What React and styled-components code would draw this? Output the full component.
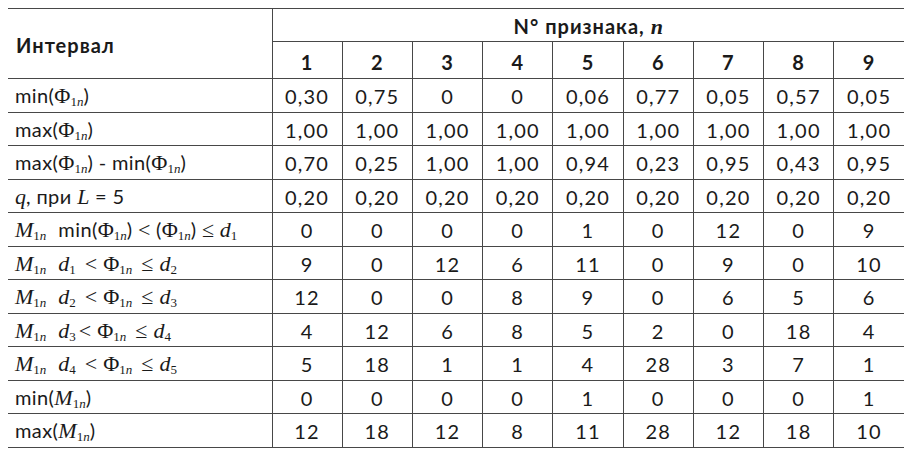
import styled, { createGlobalStyle } from "styled-components";

const line = "#474747";
const ink = "#1a1a1a";

const GlobalStyle = createGlobalStyle`
  body {
    margin: 0;
    background: #ffffff;
  }
`;

const Page = styled.div`
  padding: 8px 8px 0 8px;
`;

const Table = styled.table`
  width: 896px;
  border-collapse: collapse;
  table-layout: fixed;
  font-family: "Lato", "Open Sans", sans-serif;
  font-size: 20px;
  color: ${ink};
`;

const Row = styled.tr`
  height: ${(p) => p.$h || 33.5}px;
  border-top: 1px solid ${line};
  border-bottom: 1px solid ${line};
`;

const HeadCell = styled.th`
  font-weight: 700;
  text-align: ${(p) => (p.$left ? "left" : "center")};
  padding: ${(p) => (p.$left ? "2px 0 0 8px" : "3px 0 0 0")};
  border-left: ${(p) => (p.$left ? "none" : `1px solid ${line}`)};
  border-bottom: 1px solid ${line};
  letter-spacing: 1px;
`;

const LabelCell = styled.td`
  text-align: left;
  padding: 2px 0 0 7px;
  white-space: nowrap;
  letter-spacing: 0.4px;
`;

const Cell = styled.td`
  text-align: center;
  padding: 2px 0 0 0;
  border-left: 1px solid ${line};
  letter-spacing: 1.2px;
`;

const Serif = styled.span`
  font-family: "Liberation Serif", "Times New Roman", serif;
  font-size: 22px;
  font-style: ${(p) => (p.$italic ? "italic" : "normal")};
  font-weight: ${(p) => (p.$bold ? 700 : 400)};
  letter-spacing: 0;
`;

const Sub = styled.sub`
  font-family: "Liberation Serif", "Times New Roman", serif;
  font-size: 13px;
  font-style: normal;
  vertical-align: -3px;
  line-height: 0;
  letter-spacing: 0;
`;

const Gap = styled.span`
  display: inline-block;
  width: ${(p) => p.$w}px;
`;

const V = ({ children }) => <Serif $italic>{children}</Serif>;

const Phi = () => (
  <>
    <Serif>Φ</Serif>
    <Sub>
      1<i>n</i>
    </Sub>
  </>
);

const M = () => (
  <>
    <V>M</V>
    <Sub>
      1<i>n</i>
    </Sub>
  </>
);

const D = ({ i }) => (
  <>
    <V>d</V>
    <Sub>{i}</Sub>
  </>
);

const Range = ({ a, b, wide }) => (
  <>
    <M />
    <Gap $w={12} />
    <D i={a} />
    <Gap $w={wide ? 9 : 3} />
    <Serif>&lt;</Serif>
    <Gap $w={6} />
    <Phi />
    <Gap $w={9} />
    <Serif>≤</Serif>
    <Gap $w={6} />
    <D i={b} />
  </>
);

const rows = [
  {
    label: (
      <>
        min(
        <Phi />)
      </>
    ),
    values: ["0,30", "0,75", "0", "0", "0,06", "0,77", "0,05", "0,57", "0,05"],
  },
  {
    label: (
      <>
        max(
        <Phi />)
      </>
    ),
    values: Array(9).fill("1,00"),
  },
  {
    label: (
      <>
        max(
        <Phi />) - min(
        <Phi />)
      </>
    ),
    values: ["0,70", "0,25", "1,00", "1,00", "0,94", "0,23", "0,95", "0,43", "0,95"],
  },
  {
    label: (
      <>
        <V>q</V>, при <V>L</V> = 5
      </>
    ),
    values: Array(9).fill("0,20"),
  },
  {
    label: (
      <>
        <M />
        <Gap $w={12} />
        min(
        <Phi />) <Serif>&lt;</Serif> (<Phi />) <Serif>≤</Serif> <D i={1} />
      </>
    ),
    values: ["0", "0", "0", "0", "1", "0", "12", "0", "9"],
  },
  { label: <Range a={1} b={2} wide />, values: ["9", "0", "12", "6", "11", "0", "9", "0", "10"] },
  { label: <Range a={2} b={3} wide />, values: ["12", "0", "0", "8", "9", "0", "6", "5", "6"] },
  { label: <Range a={3} b={4} />, values: ["4", "12", "6", "8", "5", "2", "0", "18", "4"] },
  { label: <Range a={4} b={5} wide />, values: ["5", "18", "1", "1", "4", "28", "3", "7", "1"] },
  {
    label: (
      <>
        min(
        <M />)
      </>
    ),
    values: ["0", "0", "0", "0", "1", "0", "0", "0", "1"],
  },
  {
    label: (
      <>
        max(
        <M />)
      </>
    ),
    values: ["12", "18", "12", "8", "11", "28", "12", "18", "10"],
  },
];

export default function App() {
  return (
    <Page>
      <GlobalStyle />
      <Table>
        <colgroup>
          <col style={{ width: 264 }} />
          {Array.from({ length: 9 }, (_, i) => (
            <col key={i} />
          ))}
        </colgroup>
        <thead>
          <Row $h={33}>
            <HeadCell $left rowSpan={2}>
              Интервал
            </HeadCell>
            <HeadCell colSpan={9}>
              N° признака, <Serif $italic $bold>n</Serif>
            </HeadCell>
          </Row>
          <Row $h={37}>
            {Array.from({ length: 9 }, (_, i) => (
              <HeadCell key={i}>{i + 1}</HeadCell>
            ))}
          </Row>
        </thead>
        <tbody>
          {rows.map((r, i) => (
            <Row key={i}>
              <LabelCell>{r.label}</LabelCell>
              {r.values.map((v, j) => (
                <Cell key={j}>{v}</Cell>
              ))}
            </Row>
          ))}
        </tbody>
      </Table>
    </Page>
  );
}
